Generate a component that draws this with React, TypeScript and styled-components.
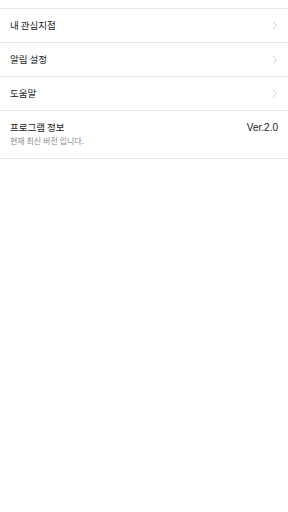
import styled, { createGlobalStyle } from "styled-components";

const Global = createGlobalStyle`
  html, body {
    margin: 0;
    padding: 0;
    background: #ffffff;
  }
  body {
    font-family: "Noto Sans CJK KR", "Noto Sans", sans-serif;
  }
`;

const Page = styled.div`
  width: 288px;
  min-height: 512px;
  background: #ffffff;
  padding-top: 8px;
  box-sizing: border-box;
`;

const List = styled.div`
  border-top: 1px solid #e8e8e8;
  display: flex;
  flex-direction: column;
`;

const Row = styled.div<{ $tall?: boolean }>`
  display: flex;
  align-items: ${(p) => (p.$tall ? "flex-start" : "center")};
  justify-content: space-between;
  height: ${(p) => (p.$tall ? "37px" : "33px")};
  padding: ${(p) => (p.$tall ? "10px 10px 0 10px" : "0 10px")};
  box-sizing: content-box;
  border-bottom: 1px solid #e8e8e8;
`;

const TextCol = styled.div`
  display: flex;
  flex-direction: column;
  gap: 1px;
`;

const Label = styled.span`
  font-size: 9.5px;
  color: #222222;
  line-height: 14px;
  margin-top: -1px;
`;

const Sub = styled.span`
  font-size: 8px;
  color: #8a8a8a;
  line-height: 12px;
`;

const Version = styled.span`
  font-family: "Liberation Sans", Arial, sans-serif;
  font-size: 10px;
  color: #222222;
  line-height: 14px;
`;

const Chevron = () => (
  <svg width="6" height="9" viewBox="0 0 6 9" fill="none">
    <path d="M1 1l3.5 3.5L1 8" stroke="#cfcfcf" strokeWidth="1" />
  </svg>
);

const items = ["내 관심지점", "알림 설정", "도움말"];

export default function App() {
  return (
    <Page>
      <Global />
      <List>
        {items.map((t) => (
          <Row key={t}>
            <Label>{t}</Label>
            <Chevron />
          </Row>
        ))}
        <Row $tall>
          <TextCol>
            <Label>프로그램 정보</Label>
            <Sub>현재 최신 버전 입니다.</Sub>
          </TextCol>
          <Version>Ver.2.0</Version>
        </Row>
      </List>
    </Page>
  );
}
